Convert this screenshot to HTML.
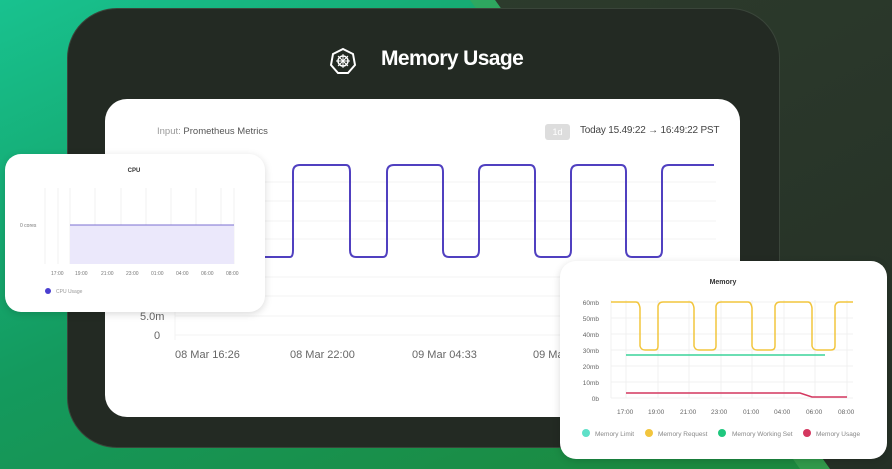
<!DOCTYPE html><html><head><style>
body{margin:0;width:892px;height:469px;overflow:hidden;position:relative;font-family:"Liberation Sans",sans-serif;background:#2b3a2b}
.abs{position:absolute}
</style></head><body>
<svg class="abs" style="left:0;top:0" width="892" height="469"><defs><linearGradient id="g" x1="0" y1="0" x2="0.8" y2="1"><stop offset="0" stop-color="#18c28f"/><stop offset="0.5" stop-color="#149a5e"/><stop offset="1" stop-color="#1c8a40"/></linearGradient><linearGradient id="d" x1="0" y1="0" x2="1" y2="1"><stop offset="0" stop-color="#2f3f2e"/><stop offset="1" stop-color="#253026"/></linearGradient></defs>
<rect width="892" height="469" fill="url(#d)"/><polygon points="0,0 495,0 830,469 0,469" fill="url(#g)"/><polygon points="470,0 495,0 830,469 800,469" fill="#3fa553" opacity="0.6"/></svg>
<div class="abs" style="left:67px;top:8px;width:711px;height:438px;border-radius:50px;background:#232a23;border:1px solid #3a453a"></div>
<svg class="abs" style="left:328px;top:46px" width="30" height="30" viewBox="0 0 30 30"><polygon points="15,3 25,8 27,19 20,27 10,27 3,19 5,8" fill="none" stroke="#fff" stroke-width="2"/><circle cx="15" cy="15" r="5" fill="none" stroke="#fff" stroke-width="1.5"/><path d="M15 8v14M8 15h14M10 10l10 10M20 10l-10 10" stroke="#fff" stroke-width="1"/></svg>
<div class="abs" style="left:381px;top:47px;color:#fff;font-size:21px;font-weight:bold;letter-spacing:-0.6px">Memory Usage</div>
<div class="abs" style="left:105px;top:99px;width:635px;height:318px;border-radius:22px;background:#fff"></div>
<div class="abs" style="left:157px;top:126px;font-size:9.5px;color:#999">Input: <span style="color:#555">Prometheus Metrics</span></div>
<div class="abs" style="left:545px;top:124px;width:25px;height:16px;background:#ddd;border-radius:3px;color:#fff;font-size:9px;text-align:center;line-height:16px">1d</div>
<div class="abs" style="left:580px;top:125px;font-size:10px;color:#444;letter-spacing:-0.2px">Today 15.49:22 → 16:49:22 PST</div>
<svg class="abs" style="left:0;top:0" width="892" height="469">
<g stroke="#f3f3f3" stroke-width="1"><line x1="175" y1="182" x2="716" y2="182"/><line x1="175" y1="201" x2="716" y2="201"/><line x1="175" y1="221" x2="716" y2="221"/><line x1="175" y1="239" x2="716" y2="239"/><line x1="175" y1="277" x2="716" y2="277"/><line x1="175" y1="296" x2="716" y2="296"/><line x1="175" y1="316" x2="716" y2="316"/><line x1="175" y1="335" x2="716" y2="335"/><line x1="175" y1="290" x2="175" y2="340"/></g>
<path d="M250 257H290Q293 257 293 250V172Q293 165 300 165H346Q350 165 350 172V250Q350 257 356 257H383Q387 257 387 250V172Q387 165 394 165H438Q443 165 443 172V250Q443 257 449 257H474Q479 257 479 250V172Q479 165 486 165H530Q535 165 535 172V250Q535 257 541 257H566Q571 257 571 250V172Q571 165 578 165H621Q626 165 626 172V250Q626 257 632 257H657Q662 257 662 250V172Q662 165 669 165H714" fill="none" stroke="#5040c0" stroke-width="2"/>
<g fill="#666" font-size="11"><text x="140" y="320">5.0m</text><text x="154" y="339">0</text><text x="175" y="358">08 Mar 16:26</text><text x="290" y="358">08 Mar 22:00</text><text x="412" y="358">09 Mar 04:33</text><text x="533" y="358">09 Ma</text></g>
</svg>
<div class="abs" style="left:5px;top:154px;width:260px;height:158px;border-radius:16px;background:#fff;box-shadow:0 2px 8px rgba(0,0,0,.15)"></div>
<svg class="abs" style="left:0;top:0" width="892" height="469">
<text x="134" y="172" font-size="6" fill="#333" text-anchor="middle" font-weight="bold">CPU</text>
<g stroke="#f0f0f0"><line x1="45" y1="188" x2="45" y2="264"/><line x1="58" y1="188" x2="58" y2="264"/><line x1="70" y1="188" x2="70" y2="264"/><line x1="95" y1="188" x2="95" y2="264"/><line x1="121" y1="188" x2="121" y2="264"/><line x1="146" y1="188" x2="146" y2="264"/><line x1="171" y1="188" x2="171" y2="264"/><line x1="196" y1="188" x2="196" y2="264"/><line x1="221" y1="188" x2="221" y2="264"/><line x1="234" y1="188" x2="234" y2="264"/></g>
<rect x="70" y="225" width="164" height="39" fill="#ebe8fb"/><line x1="70" y1="225" x2="234" y2="225" stroke="#7b6fd0" stroke-width="1"/>
<text x="20" y="227" font-size="5" fill="#777">0 cores</text>
<g font-size="5" fill="#777"><text x="51" y="275">17:00</text><text x="75" y="275">19:00</text><text x="101" y="275">21:00</text><text x="126" y="275">23:00</text><text x="151" y="275">01:00</text><text x="176" y="275">04:00</text><text x="201" y="275">06:00</text><text x="226" y="275">08:00</text></g>
<circle cx="48" cy="291" r="3" fill="#4a3fd0"/><text x="56" y="293" font-size="5" fill="#999">CPU Usage</text>
</svg>
<div class="abs" style="left:560px;top:261px;width:327px;height:198px;border-radius:16px;background:#fff;box-shadow:0 2px 8px rgba(0,0,0,.15)"></div>
<svg class="abs" style="left:0;top:0" width="892" height="469">
<text x="723" y="284" font-size="7" fill="#333" text-anchor="middle" font-weight="bold">Memory</text>
<g stroke="#f0f0f0"><line x1="611" y1="302" x2="853" y2="302"/><line x1="611" y1="318" x2="853" y2="318"/><line x1="611" y1="334" x2="853" y2="334"/><line x1="611" y1="350" x2="853" y2="350"/><line x1="611" y1="366" x2="853" y2="366"/><line x1="611" y1="382" x2="853" y2="382"/><line x1="611" y1="398" x2="853" y2="398"/><line x1="611" y1="300" x2="611" y2="398"/><line x1="626" y1="300" x2="626" y2="398"/><line x1="658" y1="300" x2="658" y2="398"/><line x1="689" y1="300" x2="689" y2="398"/><line x1="721" y1="300" x2="721" y2="398"/><line x1="752" y1="300" x2="752" y2="398"/><line x1="784" y1="300" x2="784" y2="398"/><line x1="815" y1="300" x2="815" y2="398"/><line x1="847" y1="300" x2="847" y2="398"/></g>
<g font-size="6.5" fill="#666" text-anchor="end"><text x="599" y="305">60mb</text><text x="599" y="321">50mb</text><text x="599" y="337">40mb</text><text x="599" y="353">30mb</text><text x="599" y="369">20mb</text><text x="599" y="385">10mb</text><text x="599" y="401">0b</text></g>
<path d="M611 302H636Q639 302 640 308V346Q641 350 645 350H655Q658 350 658 346V306Q659 302 663 302H690Q693 302 694 308V346Q695 350 699 350H712Q716 350 716 346V306Q717 302 721 302H748Q751 302 752 308V346Q753 350 757 350H771Q775 350 775 346V306Q776 302 780 302H808Q811 302 812 308V346Q813 350 817 350H831Q835 350 835 346V306Q836 302 840 302H853" fill="none" stroke="#f2c53d" stroke-width="1.5"/>
<line x1="626" y1="355" x2="825" y2="355" stroke="#3ad39a" stroke-width="1.5"/>
<path d="M626 393H800L812 397H847" fill="none" stroke="#d4375f" stroke-width="1.5"/>
<g font-size="6.5" fill="#666"><text x="617" y="414">17:00</text><text x="648" y="414">19:00</text><text x="680" y="414">21:00</text><text x="711" y="414">23:00</text><text x="743" y="414">01:00</text><text x="774" y="414">04:00</text><text x="806" y="414">06:00</text><text x="838" y="414">08:00</text></g>
<g font-size="6.5" fill="#888"><circle cx="586" cy="433" r="4" fill="#5fe0c8"/><text x="595" y="436">Memory Limit</text><circle cx="649" cy="433" r="4" fill="#f2c53d"/><text x="658" y="436">Memory Request</text><circle cx="722" cy="433" r="4" fill="#1fc77e"/><text x="732" y="436">Memory Working Set</text><circle cx="807" cy="433" r="4" fill="#d4375f"/><text x="816" y="436">Memory Usage</text></g>
</svg>
</body></html>
